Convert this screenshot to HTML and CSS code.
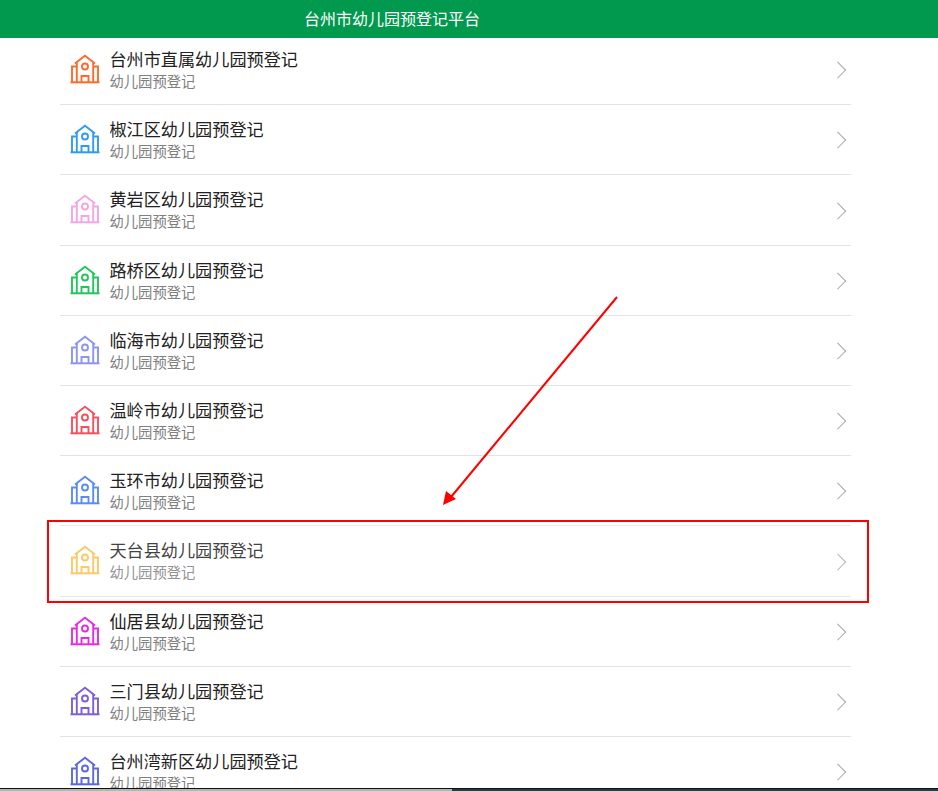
FILE: index.html
```html
<!DOCTYPE html>
<html lang="zh">
<head>
<meta charset="utf-8">
<title>台州市幼儿园预登记平台</title>
<link rel="stylesheet" href="styles.css">
</head>
<body>
<svg width="0" height="0" class="defs">
  <symbol id="school" viewBox="0 0 30 30">
    <g fill="none" stroke="currentColor" stroke-width="1.900">
      <path d="M5 9.500 15 1.800 25 9.500"/>
      <path d="M6.800 8V28M23.200 8V28"/>
      <circle cx="15" cy="12.500" r="3"/>
      <path d="M11.500 28v-6h7v6"/>
      <path d="M6.800 12.500H2V28M23.200 12.500H28V28"/>
      <path d="M0.500 28.300h29" stroke-width="2"/>
    </g>
  </symbol>
</svg>
<header class="topbar">台州市幼儿园预登记平台</header>
<main class="list">
  <a class="row first" style="color:#ff6a2b"><svg class="icon"><use href="#school"/></svg><span class="text"><b>台州市直属幼儿园预登记</b><small>幼儿园预登记</small></span><i class="chev"></i></a>
  <a class="row" style="color:#2f9bf4"><svg class="icon"><use href="#school"/></svg><span class="text"><b>椒江区幼儿园预登记</b><small>幼儿园预登记</small></span><i class="chev"></i></a>
  <a class="row" style="color:#f3a6e6"><svg class="icon"><use href="#school"/></svg><span class="text"><b>黄岩区幼儿园预登记</b><small>幼儿园预登记</small></span><i class="chev"></i></a>
  <a class="row" style="color:#22c55e"><svg class="icon"><use href="#school"/></svg><span class="text"><b>路桥区幼儿园预登记</b><small>幼儿园预登记</small></span><i class="chev"></i></a>
  <a class="row" style="color:#8c94f5"><svg class="icon"><use href="#school"/></svg><span class="text"><b>临海市幼儿园预登记</b><small>幼儿园预登记</small></span><i class="chev"></i></a>
  <a class="row" style="color:#f5505f"><svg class="icon"><use href="#school"/></svg><span class="text"><b>温岭市幼儿园预登记</b><small>幼儿园预登记</small></span><i class="chev"></i></a>
  <a class="row" style="color:#5b8def"><svg class="icon"><use href="#school"/></svg><span class="text"><b>玉环市幼儿园预登记</b><small>幼儿园预登记</small></span><i class="chev"></i></a>
  <a class="row" style="color:#fbc04d"><svg class="icon"><use href="#school"/></svg><span class="text"><b>天台县幼儿园预登记</b><small>幼儿园预登记</small></span><i class="chev"></i></a>
  <a class="row" style="color:#e52be5"><svg class="icon"><use href="#school"/></svg><span class="text"><b>仙居县幼儿园预登记</b><small>幼儿园预登记</small></span><i class="chev"></i></a>
  <a class="row" style="color:#7b5fdc"><svg class="icon"><use href="#school"/></svg><span class="text"><b>三门县幼儿园预登记</b><small>幼儿园预登记</small></span><i class="chev"></i></a>
  <a class="row" style="color:#5b68e0"><svg class="icon"><use href="#school"/></svg><span class="text"><b>台州湾新区幼儿园预登记</b><small>幼儿园预登记</small></span><i class="chev"></i></a>
</main>
<div class="callout"></div>
<svg class="arrow" viewBox="0 0 938 791" width="938" height="791">
  <line x1="617" y1="297" x2="451" y2="497" stroke="#ff0000" stroke-width="2"/>
  <polygon points="443,505 446,491 456,499" fill="#ff0000"/>
</svg>
<div class="edge"><span class="edge-light"></span><span class="edge-dark"></span></div>
</body>
</html>
```
FILE: styles.css
```css
html, body {
  margin: 0;
  padding: 0;
  height: 791px;
  overflow: hidden;
  background: #fff;
  font-family: "Noto Sans CJK SC", "Liberation Sans", sans-serif;
}
.defs { position: absolute; }
.topbar {
  height: 38px;
  background: #00994d;
  color: #fff;
  font-size: 16px;
  line-height: 36px;
  padding-left: 304px;
}
.list {
  width: 791px;
  margin-left: 60px;
}
.row {
  display: flex;
  box-sizing: border-box;
  height: 70.2px;
  padding: 11px 0 0 10px;
  border-bottom: 1px solid #e3e3e3;
  position: relative;
}
.row.first {
  height: 67.3px;
  padding-top: 8px;
}
.icon {
  width: 30px;
  height: 30px;
  margin-top: 8px;
  flex: none;
}
.text {
  margin-left: 9.400px;
  display: flex;
  flex-direction: column;
}
.text b {
  font-weight: 400;
  font-size: 17.150px;
  line-height: 25px;
  color: #222;
}
.text small {
  font-size: 14.350px;
  line-height: 20px;
  color: #808080;
}
.chev {
  position: absolute;
  right: 7.500px;
  top: 50%;
  width: 10.500px;
  height: 10.500px;
  margin-top: -5.500px;
  border-top: 1.500px solid #a6a6a6;
  border-right: 1.500px solid #a6a6a6;
  transform: rotate(45deg);
}
.first .chev {
  margin-top: -7px;
}
.callout {
  position: absolute;
  left: 47px;
  top: 520px;
  width: 818px;
  height: 78.500px;
  border: 2.500px solid #f00;
  background: rgba(255,255,255,.15);
}
.arrow {
  position: absolute;
  left: 0;
  top: 0;
}
.edge {
  position: absolute;
  left: 0;
  right: 0;
  top: 788px;
  height: 2px;
  display: flex;
  border-top: 1px solid #111;
}
.edge-light {
  width: 452px;
  background: #b5b5b5;
}
.edge-dark {
  flex: 1;
  background: #2c3a46;
}
```
